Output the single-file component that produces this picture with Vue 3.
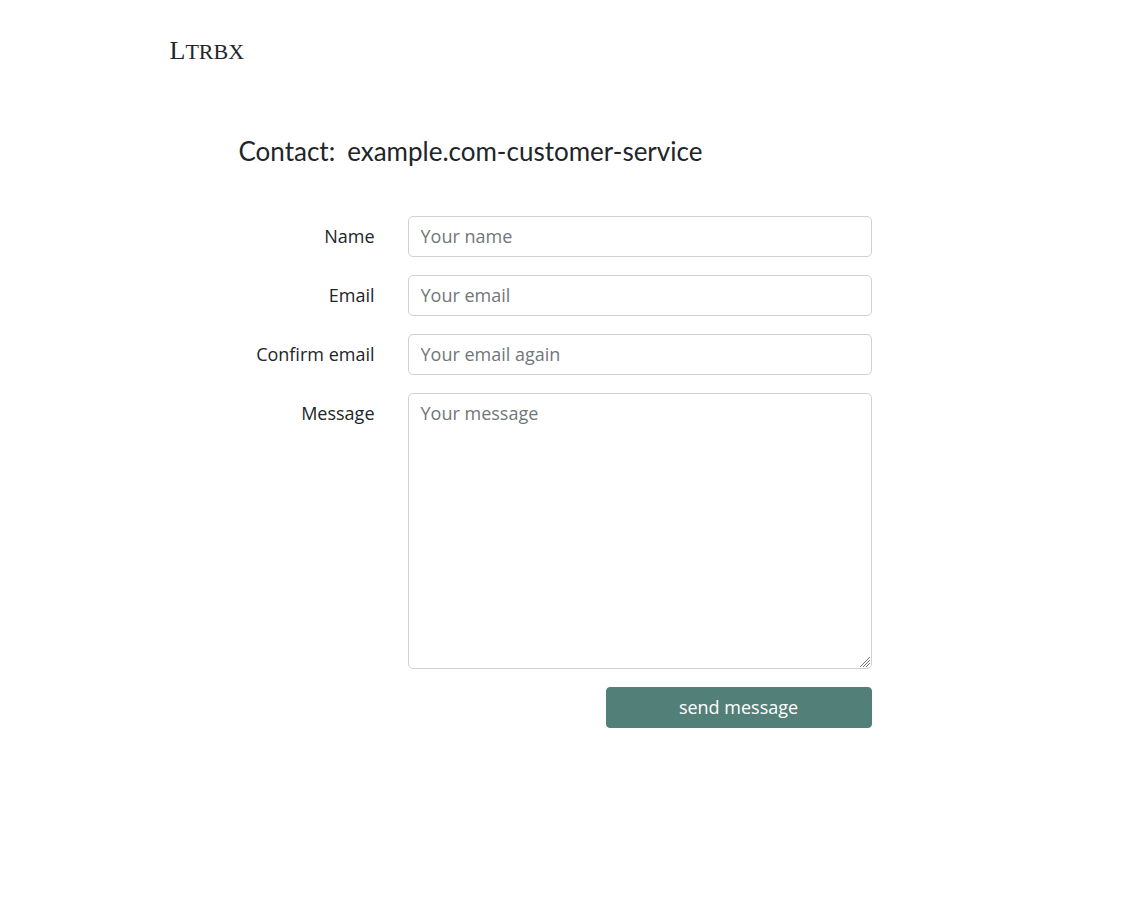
<script setup>
import { ref } from 'vue'

const name = ref('')
const email = ref('')
const confirmEmail = ref('')
const message = ref('')
</script>

<template>
  <div class="page">
    <header>
      <a class="brand" href="#">L<span class="caps">TRBX</span></a>
    </header>
    <main>
      <h1><span>Contact:</span> <span>example.com-customer-service</span></h1>
      <form @submit.prevent>
        <label for="name">Name</label>
        <input id="name" v-model="name" type="text" placeholder="Your name">
        <label for="email">Email</label>
        <input id="email" v-model="email" type="email" placeholder="Your email">
        <label for="confirm">Confirm email</label>
        <input id="confirm" v-model="confirmEmail" type="email" placeholder="Your email again">
        <label for="message">Message</label>
        <div class="message-box">
          <textarea id="message" v-model="message" placeholder="Your message"></textarea>
          <svg class="grip" viewBox="0 0 12 12" aria-hidden="true">
            <path d="M1 11 11 1M4 11 11 4M7 11 11 7" />
          </svg>
        </div>
        <button type="submit">send message</button>
      </form>
    </main>
  </div>
</template>

<style>
body {
  margin: 0;
  background: #fff;
}
</style>

<style scoped>
.page {
  box-sizing: border-box;
  max-width: 800px;
  margin: 0 auto;
  padding: 32px 0;
  color: #212529;
  font-family: "Open Sans", sans-serif;
  font-size: 18px;
  line-height: 27px;
}
.brand {
  display: inline-block;
  color: #212529;
  font-family: "Liberation Serif", serif;
  font-size: 26px;
  line-height: 38px;
  text-decoration: none;
}
.caps {
  font-size: 22px;
}
main {
  max-width: 633px;
  margin: 62px 98px 0 69px;
}
h1 {
  display: flex;
  flex-wrap: wrap;
  gap: 12px;
  margin: 0 0 47px;
  font-family: Lato, sans-serif;
  font-size: 26px;
  font-weight: 400;
  line-height: 36px;
}
form {
  display: grid;
  grid-template-columns: 136px minmax(0, 1fr);
  gap: 18px 33px;
}
label {
  padding-top: 7px;
  text-align: right;
}
input,
textarea {
  box-sizing: border-box;
  width: 100%;
  margin: 0;
  padding: 6px 12px;
  border: 1px solid #ced0d2;
  border-radius: 5px;
  background: #fff;
  color: #212529;
  font: inherit;
}
textarea {
  display: block;
  height: 276px;
  resize: vertical;
}
textarea::-webkit-resizer {
  background: transparent;
}
.message-box {
  position: relative;
}
.grip {
  position: absolute;
  right: 1px;
  bottom: 1px;
  width: 12px;
  height: 12px;
  fill: none;
  stroke: #777;
  stroke-width: 1;
  pointer-events: none;
}
input::placeholder,
textarea::placeholder {
  color: #70777b;
  opacity: 1;
}
button {
  grid-column: 2;
  justify-self: end;
  width: 266px;
  max-width: 100%;
  padding: 6px 12px;
  border: 1px solid #528078;
  border-radius: 4px;
  background: #528078;
  color: #fff;
  font: inherit;
  cursor: pointer;
}
</style>
